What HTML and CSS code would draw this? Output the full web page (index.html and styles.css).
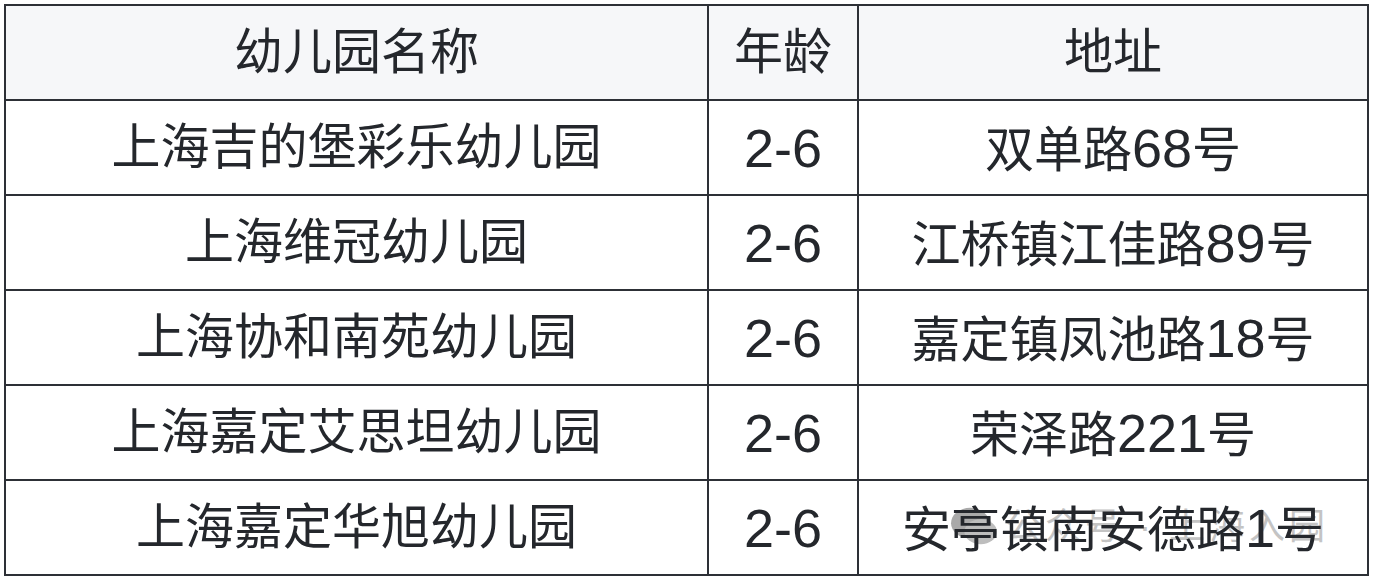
FILE: index.html
```html
<!DOCTYPE html>
<html lang="zh-CN">
<head>
<meta charset="utf-8">
<link rel="stylesheet" href="styles.css">
</head>
<body>
<div class="wrap">
<table class="kg">
  <colgroup>
    <col class="c-name">
    <col class="c-age">
    <col class="c-addr">
  </colgroup>
  <thead>
    <tr><th>幼儿园名称</th><th>年龄</th><th>地址</th></tr>
  </thead>
  <tbody>
    <tr><td>上海吉的堡彩乐幼儿园</td><td><span class="num">2-6</span></td><td>双单路<span class="num">68</span>号</td></tr>
    <tr><td>上海维冠幼儿园</td><td><span class="num">2-6</span></td><td>江桥镇江佳路<span class="num">89</span>号</td></tr>
    <tr><td>上海协和南苑幼儿园</td><td><span class="num">2-6</span></td><td>嘉定镇凤池路<span class="num">18</span>号</td></tr>
    <tr><td>上海嘉定艾思坦幼儿园</td><td><span class="num">2-6</span></td><td>荣泽路<span class="num">221</span>号</td></tr>
    <tr><td>上海嘉定华旭幼儿园</td><td><span class="num">2-6</span></td><td class="wm-cell"><span class="txt">安亭镇南安德路<span class="num">1</span>号</span><span class="wm"><svg class="wm-icon" viewBox="0 0 52 46" width="50" height="44"><ellipse cx="22" cy="19" rx="20" ry="16" fill="#a9a9a9"/><ellipse cx="33" cy="28" rx="17" ry="13" fill="#bdbdbd"/></svg><span class="wm-text">公众号 · 上海入园</span></span></td></tr>
  </tbody>
</table>
</div>
</body>
</html>
```

FILE: styles.css
```css
html, body {
  margin: 0;
  padding: 0;
  background: #ffffff;
}
.wrap {
  padding: 4px 0 0 4px;
}
.kg {
  border-collapse: collapse;
  table-layout: fixed;
  width: 1363px;
  font-family: "Liberation Sans", "Noto Sans CJK SC", sans-serif;
  font-size: 49px;
  color: #24272c;
  border: 2px solid #2d3036;
}
.c-name { width: 703px; }
.c-age { width: 150px; }
.c-addr { width: 510px; }
.kg th, .kg td {
  border: 2px solid #2d3036;
  height: 93px;
  padding: 0;
  text-align: center;
  vertical-align: middle;
  font-weight: normal;
  line-height: 1;
  white-space: nowrap;
}
.kg th {
  background: #f6f7f9;
}
.num {
  font-size: 54px;
}
.wm-cell {
  position: relative;
}
.wm-cell .txt {
  position: relative;
  z-index: 2;
}
.wm {
  position: absolute;
  left: 90px;
  top: 24px;
  display: flex;
  align-items: center;
  gap: 6px;
  z-index: 1;
}
.wm-icon {
  display: block;
}
.wm-text {
  font-size: 36px;
  color: #c4c4c4;
  letter-spacing: 4px;
}
```
